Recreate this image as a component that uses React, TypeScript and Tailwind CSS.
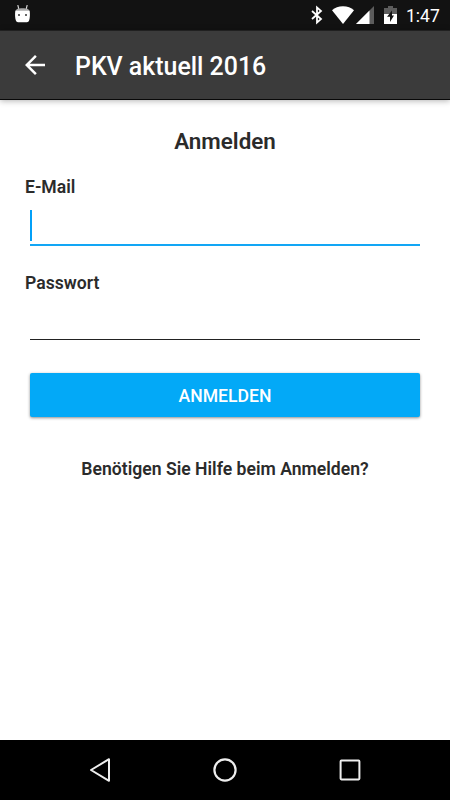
import { useState } from "react";

const StatusBar = () => {
  return (
    <div className="flex h-[30px] items-center bg-[#121212] text-white">
      <svg className="ml-[14px] h-[20px] w-[17px]" viewBox="0 0 17 20">
        <path d="M3.800 0 4.800 4M13.200 0 12.200 4" stroke="#ddd" strokeWidth="1.100" />
        <path d="M1.500 6C2.200 3.900 4 3.200 8.500 3.200s6.300.7 7 2.800z" fill="#aaa" />
        <path d="M1.300 5.800h14.400c.5 3.500.2 7.700-.6 9.800-.4 1.200-1.200 1.600-2.100 1.600H4c-.9 0-1.700-.4-2.100-1.600C1.100 13.500.8 9.300 1.300 5.800z" fill="#fff" />
        <rect x="4" y="9" width="2" height="2" fill="#666" />
        <rect x="11" y="9" width="2" height="2" fill="#666" />
      </svg>

      <svg className="ml-[280px] h-[20px] w-[14px]" viewBox="0 0 14 20" fill="none" stroke="#fff" strokeWidth="1.800">
        <path d="M1 6l9 8-4 3.600V2.400L10 6l-9 8" />
      </svg>
      <svg className="ml-[7px] h-[18px] w-[22px]" viewBox="0 0 22 18" fill="#fff">
        <path d="M11 18 0 4.200C3 1.500 6.500.2 11 .2s8 1.300 11 4z" />
      </svg>
      <svg className="ml-[2px] h-[18px] w-[18px]" viewBox="0 0 18 18">
        <path d="M18 0v18H0z" fill="#5c5c5c" />
        <path d="M13.500 4.500V18H0z" fill="#fff" />
      </svg>
      <svg className="ml-[10px] h-[18px] w-[13px]" viewBox="0 0 13 18">
        <path d="M4 0h5v2h4v16H0V2h4z" fill="#5c5c5c" />
        <path d="M0 8h13v10H0z" fill="#fff" />
        <path d="M8 4.500 3 10.800h3V16l4-6.500H8z" fill="#121212" />
      </svg>
      <span className="ml-[9px] pt-[2px] text-[17.500px] leading-[28px]">1:47</span>
    </div>
  );
};

const AppBar = () => {
  return (
    <header className="relative flex h-[70px] items-center border-t border-b border-t-[#202020] border-b-[#080808] bg-[#3b3b3b] pl-[20px] text-white shadow-[0_1px_6px_rgba(0,0,0,0.3)]">
      <button aria-label="Zurück" className="size-[30px]">
        <svg viewBox="0 0 24 24" fill="#fff">
          <path d="M20 11H7.830l5.590-5.590L12 4l-8 8 8 8 1.410-1.410L7.830 13H20v-2z" />
        </svg>
      </button>
      <h1 className="ml-[25px] pt-[3px] text-[24.900px] font-medium">PKV aktuell 2016</h1>
    </header>
  );
};

const NavigationBar = () => {
  return (
    <nav className="flex h-[60px] items-center justify-center gap-[95px] bg-black">
      <svg className="size-[30px]" viewBox="0 0 30 30" fill="none" stroke="#eee" strokeWidth="2" strokeLinejoin="round">
        <path d="M24 4.200v21.600L6 15z" />
      </svg>
      <svg className="size-[30px]" viewBox="0 0 30 30" fill="none" stroke="#eee" strokeWidth="2.200">
        <circle cx="15" cy="15" r="10.600" />
      </svg>
      <svg className="size-[30px]" viewBox="0 0 30 30" fill="none" stroke="#eee" strokeWidth="2">
        <rect x="5.600" y="5.600" width="18.800" height="18.800" rx="0.800" />
      </svg>
    </nav>
  );
};

const App = () => {
  const [email, setEmail] = useState("");
  const [password, setPassword] = useState("");

  return (
    <div className="flex h-[800px] w-[450px] flex-col overflow-hidden bg-white font-['Roboto',sans-serif] text-[#2b2b2b]">
      <StatusBar />
      <AppBar />

      <main className="flex flex-1 flex-col px-[25px] pt-[26px]">
        <h2 className="text-center text-[22.400px] leading-[30px] font-semibold">Anmelden</h2>

        <label htmlFor="email" className="mt-[20px] text-[17.600px] leading-[22px] font-semibold">
          E-Mail
        </label>
        <div className="mx-[5px] mt-[12px] flex h-[36px] border-b-[2px] border-[#12a6f5]">
          {/* Text cursor */}
          <span className="h-[31px] w-[2px] bg-[#03a0f8]" />
          <input
            id="email"
            value={email}
            onChange={(e) => setEmail(e.target.value)}
            className="h-[31px] flex-1 outline-none"
          />
        </div>

        <label htmlFor="password" className="mt-[26px] text-[17.600px] leading-[22px] font-semibold">
          Passwort
        </label>
        <input
          id="password"
          type="password"
          value={password}
          onChange={(e) => setPassword(e.target.value)}
          className="mx-[5px] mt-[12px] h-[34px] border-b border-[#222] outline-none"
        />

        <button className="mx-[5px] mt-[33px] h-[44px] rounded-[2px] bg-[#03a9f7] pt-[2px] text-[17.600px] font-medium text-white shadow-[0_1px_3px_rgba(0,0,0,0.45)]">
          ANMELDEN
        </button>

        <a href="#" className="mt-[41px] text-center text-[17.600px] leading-[22px] font-semibold">
          Benötigen Sie Hilfe beim Anmelden?
        </a>
      </main>

      <NavigationBar />
    </div>
  );
};

export default App;
